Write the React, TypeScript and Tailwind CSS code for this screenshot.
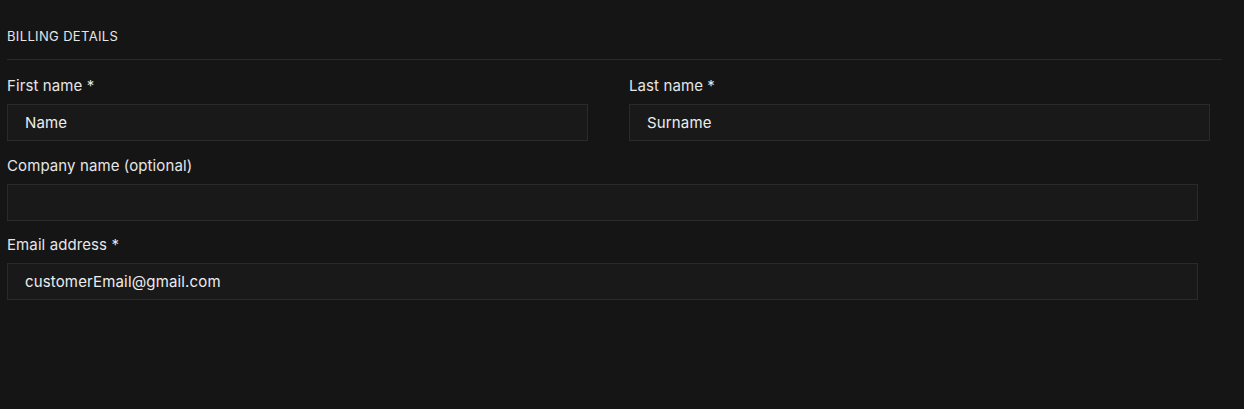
const FONT = { fontFamily: 'Inter, "Noto Sans", sans-serif' }

type FieldProps = {
  label: string
  value?: string
  width: string
  className?: string
}

function Field({ label, value = '', width, className = '' }: FieldProps) {
  return (
    <div className={`flex flex-col ${width} ${className}`}>
      <label className="text-[15px] leading-[20px] tracking-[0.1px] text-[#e6e6e6]">{label}</label>
      <input
        type="text"
        defaultValue={value}
        className="mt-[8px] h-[37px] w-full border border-[#2a2a2a] bg-[#191919] pl-[17px] text-[15px] tracking-[0.15px] text-[#ededed] outline-none"
      />
    </div>
  )
}

export default function App() {
  return (
    <div className="h-[409px] w-full bg-[#151515] pl-[7px] pt-[28px]" style={FONT}>
      {/* Heading */}
      <div className="w-[1215px] border-b border-[#2a2a2a] pb-[15px]">
        <h2 className="text-[13px] leading-[16px] tracking-[0.35px] uppercase text-[#e6e6e6]">Billing details</h2>
      </div>

      <div className="mt-[16px] flex flex-col">
        <div className="flex gap-[41px]">
          <Field label="First name *" value="Name" width="w-[581px]" />
          <Field label="Last name *" value="Surname" width="w-[581px]" />
        </div>
        <Field label="Company name (optional)" width="w-[1191px]" className="mt-[15px]" />
        <Field label="Email address *" value="customerEmail@gmail.com" width="w-[1191px]" className="mt-[14px]" />
      </div>
    </div>
  )
}
